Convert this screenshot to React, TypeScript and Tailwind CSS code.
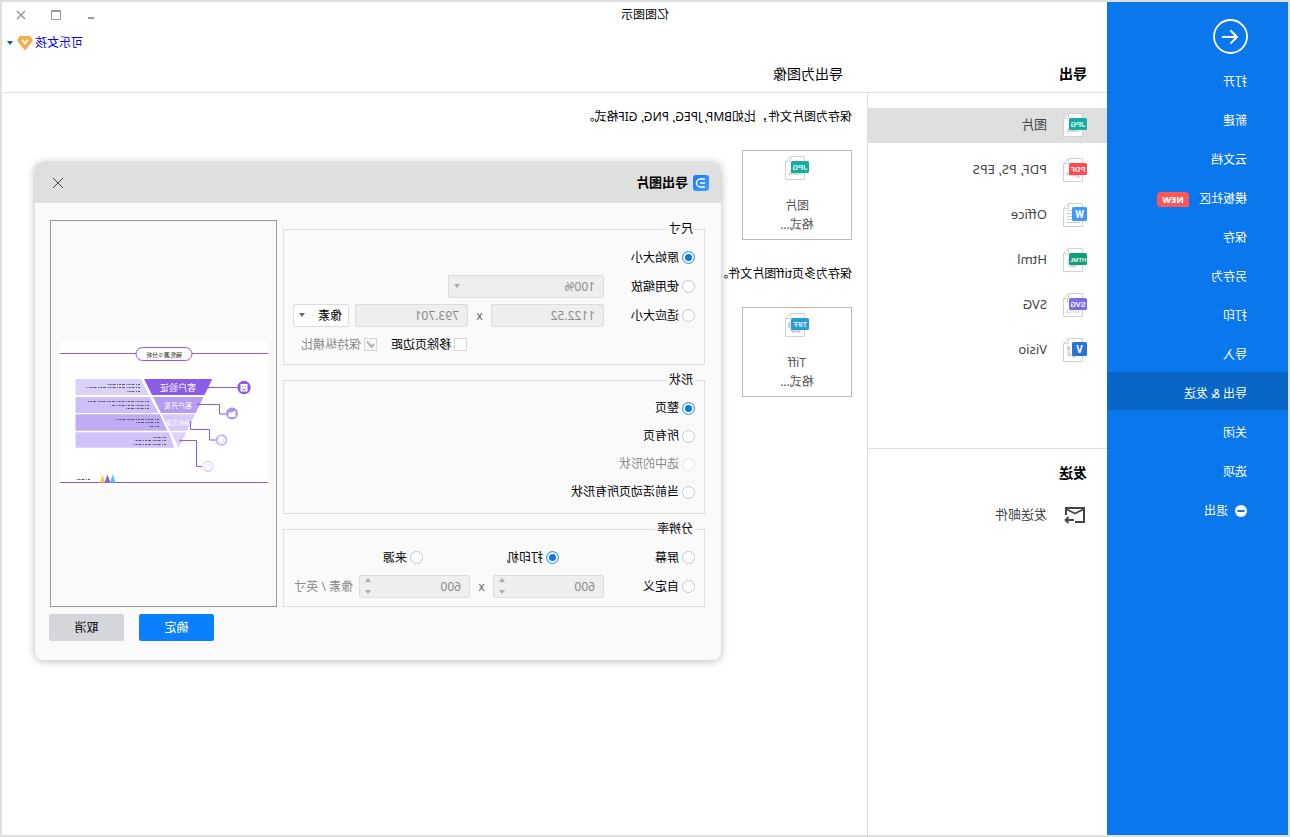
import type { ReactNode } from "react";
import clsx from "clsx";

type FileKind = "jpg" | "pdf" | "office" | "html" | "svg" | "visio" | "tiff";

const menu = [
  { name: "打开" },
  { name: "新建" },
  { name: "云文档" },
  { name: "模板社区", badge: "NEW" },
  { name: "保存" },
  { name: "另存为" },
  { name: "打印" },
  { name: "导入" },
  { name: "导出 & 发送", active: true },
  { name: "关闭" },
  { name: "选项" },
  { name: "退出", exit: true },
];

const formats: { name: string; kind: FileKind; active?: boolean }[] = [
  { name: "图片", kind: "jpg", active: true },
  { name: "PDF, PS, EPS", kind: "pdf" },
  { name: "Office", kind: "office" },
  { name: "Html", kind: "html" },
  { name: "SVG", kind: "svg" },
  { name: "Visio", kind: "visio" },
];

const badges = {
  jpg: { text: "JPG", color: "#13ada0", size: 8 },
  pdf: { text: "PDF", color: "#ff4a50", size: 8 },
  office: { text: "W", color: "#3d98ff", size: 10 },
  html: { text: "HTML", color: "#12a078", size: 6 },
  svg: { text: "SVG", color: "#7f6be4", size: 8 },
  visio: { text: "V", color: "#2b72da", size: 10 },
  tiff: { text: "TIFF", color: "#2a9bd8", size: 7 },
};

const FileIcon = ({ kind }: { kind: FileKind }) => {
  const { text, color, size } = badges[kind];
  const square = text.length === 1;

  return (
    <svg width="24" height="24" viewBox="0 0 24 24" fill="none" className="shrink-0">
      <path d="M4.5 .5h14l5 5v18h-19z" fill="#fff" stroke="#d2d2d2" />
      <path d="M18.5 .5v5h5" stroke="#d2d2d2" />
      {kind === "jpg" && <path d="M7 19l4-5 3 3 3-6 4 8z" fill="#d8d8d8" />}
      {kind === "pdf" && <path d="M8 20q2-4 5-3t8-2" stroke="#d2d2d2" strokeWidth="2.5" />}
      {kind === "office" && <path d="M10 7.500h10M10 10.500h10M10 13.500h10M7 16.500h13M7 19.500h13" stroke="#d2d2d2" />}
      {kind === "html" && <circle cx="14" cy="14" r="5.500" fill="#d2d2d2" />}
      {kind === "svg" && <path d="M8.500 16v4h3v-2h5v2h3v-4M19.500 5v5" stroke="#d2d2d2" />}
      {kind === "visio" && <path d="M18.500 10v7h-3M11 18.500h4" stroke="#d2d2d2" strokeWidth="2" />}
      {kind === "visio" && <circle cx="18.500" cy="10" r="2" fill="#d2d2d2" />}
      {kind === "tiff" && <path d="M8 16h11v2h-2v2h-3v-1h-2v1H9z M18 9h3v6h-3z" fill="#d2d2d2" />}
      {square ? (
        <rect y="4" width="15" height="14" rx="1.500" fill={color} />
      ) : (
        <rect y="5" width="18" height="12" rx="1.500" fill={color} />
      )}
      <text
        x={square ? 7.5 : 9}
        y={square ? 14.5 : size === 8 ? 14 : 13.5}
        textAnchor="middle"
        fontSize={size}
        fontWeight={square ? 700 : 500}
        fill="#fff"
        className="font-['Roboto']"
      >
        {text}
      </text>
    </svg>
  );
};

const Caret = ({ className }: { className?: string }) => (
  <svg width="6" height="4" viewBox="0 0 6 4" className={className}>
    <path d="M0 0h6L3 4z" fill="currentColor" />
  </svg>
);

const Group = ({ title, children }: { title: string; children: ReactNode }) => (
  <fieldset className="border border-[#dfdfdf] px-[9px] pb-[5px]">
    <legend className="h-4 px-0.5 leading-4">{title}</legend>
    <div className="pt-1.5">{children}</div>
  </fieldset>
);

type RadioProps = { name: string; label: string; checked?: boolean; disabled?: boolean; className?: string };

const Radio = ({ name, label, checked, disabled, className }: RadioProps) => (
  <label className={clsx("flex items-center gap-[3px]", disabled && "text-[#8a8a8a]", className)}>
    <input
      type="radio"
      name={name}
      defaultChecked={checked}
      disabled={disabled}
      className="size-[13px] appearance-none rounded-full border border-[#c6c6c6] bg-white checked:border-[#4b9af2] checked:bg-[#0a77ec] checked:shadow-[inset_0_0_0_2px_white] disabled:border-[#e4e4e4]"
    />
    {label}
  </label>
);

const fieldStyle = "h-[23px] rounded-xs border border-[#dcdcdc] bg-[#eeeeee] px-2 text-xs text-[#8a8a8a]";

const Spinner = ({ label }: { label: string }) => (
  <div className="relative">
    <input aria-label={label} defaultValue="600" disabled className={clsx(fieldStyle, "block w-[111px]")} />
    <Caret className="absolute right-1.5 top-[3px] rotate-180 text-[#aaa]" />
    <Caret className="absolute bottom-1 right-1.5 text-[#aaa]" />
  </div>
);

const Preview = () => (
  <svg viewBox="0 0 208 147" className="w-[208px] bg-white" fill="none">
    <path d="M0 12.500h208M0 141.500h208" stroke="#8a5ce8" />
    <rect x="76" y="6.500" width="56" height="13" rx="6.500" fill="#fff" stroke="#8a5ce8" />
    <text x="104" y="15.500" textAnchor="middle" fontSize="6" fill="#222">销售漏斗分析</text>

    <path d="M55.700 38H124l-8 16H63.500z" fill="#8a5ce8" />
    <path d="M64.500 56H115l-8 16H72.300z" fill="#b69df0" />
    <path d="M73 73.300h33.200l-8.300 16.400H81z" fill="#d6caf8" />
    <path d="M81.800 91.300h15.300l-7.800 15.400z" fill="#dcd2fa" />
    <g fill="#fff" textAnchor="middle">
      <text x="90" y="50" fontSize="9">客户验证</text>
      <text x="90" y="67" fontSize="7">客户开发</text>
      <text x="90" y="84" fontSize="6">商机沉淀</text>
    </g>

    <path d="M127 38h65.500v16H119z" fill="#dad2f9" />
    <path d="M118 56h74.500v16H109.700z" fill="#cdbff7" />
    <path d="M108.300 73.300h84.200v16.400h-91.800z" fill="#c0acf5" />
    <path d="M99 91.300h93.500v15.400H93.700z" fill="#d0c3f8" />
    <g stroke="#5c5478" strokeWidth="1" strokeDasharray="2 1 1 1.500 3 1">
      <path d="M128 43.500h34M128 46.500h54M128 50.500h13" />
      <path d="M119 60.500h61M119 64.500h37M119 67.500h23" />
      <path d="M109 78.500h44M109 81.500h24M109 85.500h10" />
      <path d="M102 96.500h13M102 99.500h31M102 103.500h34" />
      <path d="M178 138.500h14" />
    </g>

    <g stroke="#8a5ce8">
      <path d="M59.500 46.500H31M69.500 63.500h-21v9.500H42M77.500 81v7.500h-19V99H52M87.500 99.500h-16v26H66" />
    </g>
    <g fill="#8a5ce8">
      <circle cx="24" cy="46.500" r="6.700" />
      <circle cx="59.500" cy="46.500" r="1" />
      <circle cx="69.500" cy="63.500" r="1" />
      <circle cx="77.500" cy="81.500" r="1" />
      <circle cx="87.500" cy="99.500" r="1" />
    </g>
    <path d="M20.500 43h7v7.500h-7z" fill="#fff" />
    <path d="M22.500 45v1M25.500 45v1M22.500 48.500h3" stroke="#8a5ce8" />
    <circle cx="36" cy="72.500" r="6" fill="#ae94ee" />
    <path d="M32.500 70h2l1 1.500h4V76h-7z" fill="#fff" />
    <circle cx="46.500" cy="99" r="5" fill="#fff" stroke="#c0acf5" strokeWidth="1.500" />
    <path d="M43.500 96l5-1.500 2 6-5 2z" stroke="#ddd3fa" />
    <circle cx="60" cy="125.500" r="5.200" fill="#fff" stroke="#d6caf8" />
    <path d="M56.500 126l3.500-3 3.500 3M57.500 126v3.500h5V126" stroke="#e6defb" />

    <path d="M152.500 141.500l2.800-8 2.800 8z" fill="#49c7ee" />
    <path d="M157.700 141.500l2.800-8 2.800 8z" fill="#8a5ce8" />
    <path d="M162.700 141.500l2.800-8 2.800 8z" fill="#ffc93f" />
  </svg>
);

const ExportDialog = () => (
  <form className="absolute right-[33px] top-40 w-[686px] overflow-hidden rounded-lg bg-[#fafafa] shadow-[0_1px_8px_rgba(0,0,0,0.28)]">
    <div className="flex h-[41px] items-center bg-[#dfdfdf] pl-3 pr-4">
      <svg width="16" height="16" viewBox="0 0 16 16" fill="none">
        <defs>
          <linearGradient id="logo" x1="1" y1="0" x2="0" y2="1">
            <stop stopColor="#1476ff" />
            <stop offset="1" stopColor="#45a4ff" />
          </linearGradient>
        </defs>
        <rect width="16" height="16" rx="3" fill="url(#logo)" />
        <path d="M4 4h4.500a4 4 0 0 1 0 8H4M4 8h5" stroke="#fff" strokeWidth="1.500" />
      </svg>
      <h2 className="ml-[5px] text-[13px] font-bold">导出图片</h2>
      <button type="button" aria-label="关闭" className="ml-auto p-px">
        <svg width="12" height="12" viewBox="0 0 12 12" stroke="#444">
          <path d="M1 1l10 10M11 1L1 11" />
        </svg>
      </button>
    </div>

    <div className="flex gap-1.5 pl-4 pr-[15px] pt-[17px]">
      <div className="flex flex-1 flex-col gap-[7px] pt-px">
        <Group title="尺寸">
          <div className="flex h-[29px] items-center">
            <Radio name="size" label="原始大小" checked />
          </div>
          <div className="flex h-[29px] items-center">
            <Radio name="size" label="使用缩放" className="w-[91px]" />
            <div className="relative">
              <select aria-label="缩放" disabled className={clsx(fieldStyle, "block w-[156px] appearance-none opacity-100")}>
                <option>100%</option>
              </select>
              <Caret className="absolute right-1.5 top-[9px] text-[#aaa]" />
            </div>
          </div>
          <div className="flex h-[29px] items-center">
            <Radio name="size" label="适应大小" className="w-[91px]" />
            <input aria-label="宽" defaultValue="1122.52" disabled className={clsx(fieldStyle, "w-[113px]")} />
            <span className="w-[23px] text-center text-[#666]">x</span>
            <input aria-label="高" defaultValue="793.701" disabled className={clsx(fieldStyle, "w-[113px]")} />
            <div className="relative ml-1.5">
              <select
                aria-label="单位"
                className="block h-[23px] w-14 appearance-none rounded-xs border border-[#dcdcdc] bg-white px-1.5 text-xs"
              >
                <option>像素</option>
              </select>
              <Caret className="absolute right-1.5 top-[9px] text-[#666]" />
            </div>
          </div>
          <div className="flex h-[29px] items-center gap-3.5 pl-[228px]">
            <label className="flex items-center gap-[3px]">
              <input type="checkbox" className="size-[13px] appearance-none border border-[#d6d6d6] bg-white" />
              移除页边距
            </label>
            <label className="flex items-center gap-[3px] text-[#8a8a8a]">
              <span className="relative">
                <input
                  type="checkbox"
                  defaultChecked
                  disabled
                  className="block size-[13px] appearance-none border border-[#d6d6d6] bg-[#f6f6f6]"
                />
                <svg viewBox="0 0 13 13" fill="none" stroke="#b5b5b5" strokeWidth="2" className="absolute inset-0">
                  <path d="M3 6l2.500 3L10 3.500" />
                </svg>
              </span>
              保持纵横比
            </label>
          </div>
        </Group>

        <Group title="形状">
          <div className="pb-0.5">
            <Radio name="shape" label="整页" checked className="h-7" />
            <Radio name="shape" label="所有页" className="h-7" />
            <Radio name="shape" label="选中的形状" disabled className="h-7" />
            <Radio name="shape" label="当前活动页所有形状" className="h-7" />
          </div>
        </Group>

        <Group title="分辨率">
          <div className="flex h-[29px] items-center">
            <Radio name="dpi" label="屏幕" className="w-[136px]" />
            <Radio name="dpi" label="打印机" checked className="w-[136px]" />
            <Radio name="dpi" label="来源" />
          </div>
          <div className="flex h-[29px] items-center">
            <Radio name="dpi" label="自定义" className="w-[91px]" />
            <Spinner label="横向分辨率" />
            <span className="w-[23px] text-center text-[#666]">x</span>
            <Spinner label="纵向分辨率" />
            <span className="ml-1.5 text-[#8a8a8a]">像素 / 英寸</span>
          </div>
        </Group>
      </div>

      <div className="flex w-[227px] items-center justify-center border border-[#999] pr-px pt-0.5">
        <Preview />
      </div>
    </div>

    <div className="flex justify-end gap-[15px] px-3.5 pb-[19px] pt-[7px]">
      <button type="submit" className="h-[27px] w-[75px] rounded-xs bg-[#0a80ff] text-white">
        确定
      </button>
      <button type="button" className="h-[27px] w-[75px] rounded-xs bg-[#d5d6da]">
        取消
      </button>
    </div>
  </form>
);

const Tile = ({ kind, name }: { kind: FileKind; name: string }) => (
  <button className="flex h-[90px] w-[110px] flex-col items-center border border-[#bbb] pt-[5px] leading-[19px] text-[#555]">
    <FileIcon kind={kind} />
    <span className="mt-4">{name}</span>
    <span>格式...</span>
  </button>
);

export default function App() {
  return (
    <div className="relative flex min-h-screen -scale-x-100 border-2 border-[#dfdfdf] bg-white font-['Noto_Sans','Noto_Sans_CJK_SC',sans-serif] text-xs text-black">
      <nav className="w-[181px] shrink-0 bg-[#0a77ec] text-white">
        <button aria-label="返回" className="ml-10 mt-[17px] block">
          <svg width="35" height="35" viewBox="0 0 35 35" fill="none" stroke="#fff" strokeWidth="2">
            <circle cx="17.500" cy="17.500" r="16.500" strokeWidth="1.800" />
            <path d="M26 18H11M17.500 11.500L11 18l6.500 6.500" />
          </svg>
        </button>
        <ul className="mt-1.5 flex flex-col gap-px">
          {menu.map((item) => (
            <li key={item.name}>
              <a
                href="#"
                className={clsx("flex h-[38px] items-center pl-[41px] pt-1.5", item.active && "bg-[#0766c6]")}
              >
                {item.exit && (
                  <svg width="12" height="12" viewBox="0 0 12 12" className="mr-[7px]">
                    <circle cx="6" cy="6" r="6" fill="#fff" />
                    <path d="M2.500 6h7" stroke="#0a77ec" strokeWidth="2" />
                  </svg>
                )}
                {item.name}
                {item.badge && (
                  <span className="ml-2.5 h-[15px] w-8 rounded-sm rounded-bl-none bg-[#ff5659] text-center text-[9px] font-extrabold leading-[15px]">
                    {item.badge}
                  </span>
                )}
              </a>
            </li>
          ))}
        </ul>
      </nav>

      <div className="flex flex-1 flex-col">
        <header className="border-b border-[#dfdfdf]">
          <div className="flex h-[26px] items-center">
            <span className="ml-[438px]">亿图图示</span>
            <div className="ml-auto flex text-[#999]">
              <button aria-label="最小化" className="flex w-[35px] justify-center">
                <svg width="10" height="10" viewBox="0 0 10 10" stroke="currentColor" strokeWidth="2">
                  <path d="M2 8h6" />
                </svg>
              </button>
              <button aria-label="最大化" className="flex w-[35px] justify-center">
                <svg width="10" height="10" viewBox="0 0 10 10" fill="none" stroke="currentColor">
                  <path d="M.5 .5h9v9h-9zM.5 1.500h9" />
                </svg>
              </button>
              <button aria-label="关闭窗口" className="mr-0.5 flex w-[35px] justify-center">
                <svg width="10" height="10" viewBox="0 0 10 10" stroke="currentColor" strokeWidth="1.500">
                  <path d="M1 1l8 8M9 1L1 9" />
                </svg>
              </button>
            </div>
          </div>
          <div className="flex h-[30px] items-center justify-end pr-[5px]">
            <a href="#" className="text-[#0000ff]">
              可乐女孩
            </a>
            <svg width="16" height="14" viewBox="0 0 16 14" fill="none" className="mx-0.5">
              <path d="M3.500 0h9q1 0 1.500 1l2 3.500-7 9q-1 1-2 0l-7-9L2 1q.5-1 1.500-1z" fill="#f2b04c" />
              <path d="M5.200 3.800L8 7.500l2.800-3.700" stroke="#fff" strokeWidth="1.800" />
            </svg>
            <Caret className="ml-0.5 text-[#0a5aa8]" />
          </div>
          <div className="flex h-[34px] items-center pb-0.5 text-sm">
            <h1 className="w-[264px] pl-5 font-bold">导出</h1>
            <h2>导出为图像</h2>
          </div>
        </header>

        <div className="flex flex-1">
          <aside className="w-60 shrink-0 border-r border-[#dfdfdf] text-[13px] text-[#444]">
            <ul className="flex flex-col gap-2.5 pt-[15px]">
              {formats.map((item) => (
                <li key={item.name}>
                  <a
                    href="#"
                    className={clsx("flex h-[35px] items-center gap-4 pb-px pl-5", item.active && "bg-[#dfdfdf]")}
                  >
                    <FileIcon kind={item.kind} />
                    {item.name}
                  </a>
                </li>
              ))}
            </ul>
            <div className="mt-20 border-t border-[#dfdfdf] pt-3.5">
              <h2 className="pl-5 text-sm font-bold leading-5 text-black">发送</h2>
              <a href="#" className="mt-3.5 flex h-[35px] items-center gap-4 pl-5">
                <svg width="24" height="24" viewBox="0 0 24 24" fill="none" stroke="#444" strokeWidth="2">
                  <path d="M12 19H3V5h18v7" />
                  <path d="M3 6l9 4.500L21 6M13 17h8M18.500 14l3 3-3 3" strokeWidth="1.800" />
                </svg>
                发送邮件
              </a>
            </div>
          </aside>

          <main className="flex flex-col items-start gap-6 pl-[15px] pt-3.5 leading-[19px]">
            <p>保存为图片文件，比如BMP, JPEG, PNG, GIF格式。</p>
            <Tile kind="jpg" name="图片" />
            <p>保存为多页tiff图片文件。</p>
            <Tile kind="tiff" name="Tiff" />
          </main>
        </div>
      </div>

      <ExportDialog />
    </div>
  );
}
